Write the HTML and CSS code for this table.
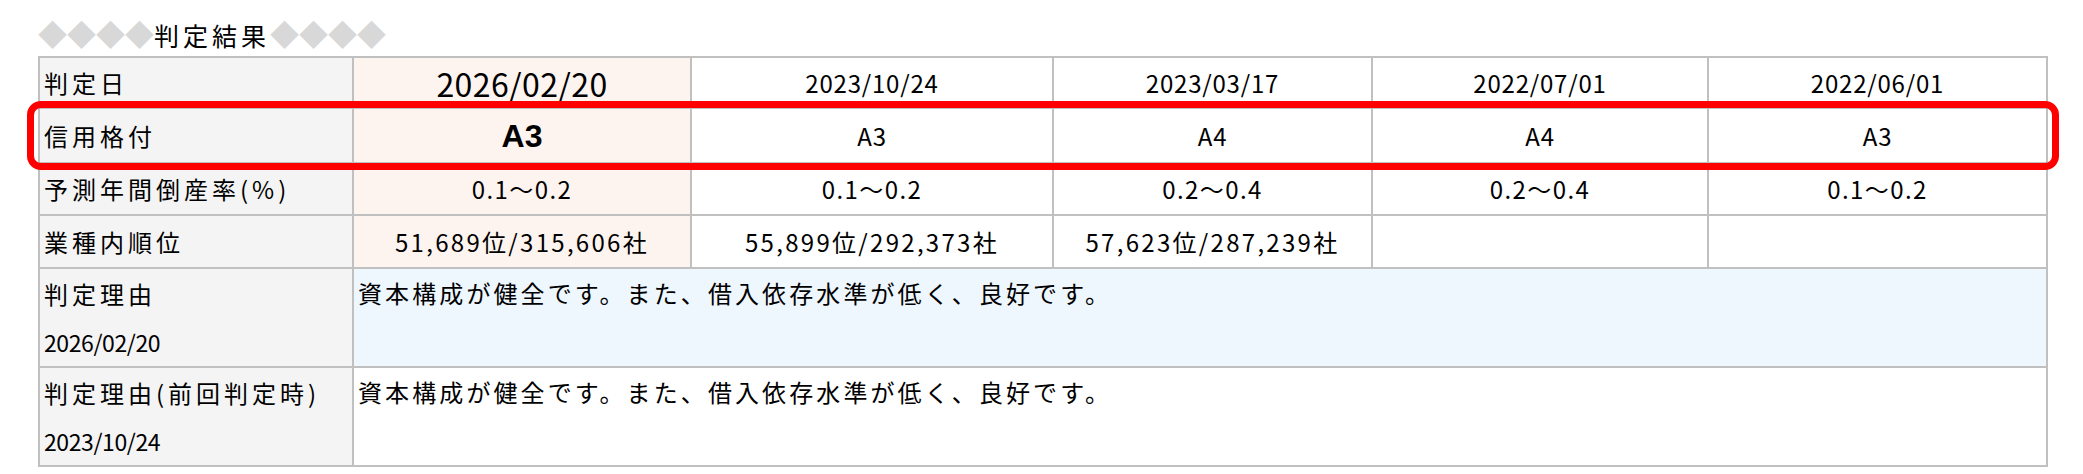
FILE: index.html
```html
<!DOCTYPE html>
<html lang="ja">
<head>
<meta charset="utf-8">
<title>判定結果</title>
<link rel="stylesheet" href="styles.css">
</head>
<body>
<div class="page">
  <h2 class="title"><span class="dia">◆◆◆◆</span>判定結果<span class="dia">◆◆◆◆</span></h2>
  <div class="result">
    <table class="grid">
      <colgroup>
        <col class="c-label">
        <col class="c-1">
        <col class="c-2">
        <col class="c-3">
        <col class="c-4">
        <col class="c-5">
      </colgroup>
      <tr class="r-date">
        <th>判定日</th>
        <td class="cur big">2026/02/20</td>
        <td>2023/10/24</td>
        <td>2023/03/17</td>
        <td>2022/07/01</td>
        <td>2022/06/01</td>
      </tr>
      <tr class="r-rate">
        <th>信用格付</th>
        <td class="cur big strong">A3</td>
        <td>A3</td>
        <td>A4</td>
        <td>A4</td>
        <td>A3</td>
      </tr>
      <tr class="r-prob">
        <th>予測年間倒産率(%)</th>
        <td class="cur">0.1〜0.2</td>
        <td>0.1〜0.2</td>
        <td>0.2〜0.4</td>
        <td>0.2〜0.4</td>
        <td>0.1〜0.2</td>
      </tr>
      <tr class="r-rank">
        <th>業種内順位</th>
        <td class="cur">51,689位/315,606社</td>
        <td>55,899位/292,373社</td>
        <td>57,623位/287,239社</td>
        <td></td>
        <td></td>
      </tr>
      <tr class="r-reason">
        <th>判定理由<br><span class="num">2026/02/20</span></th>
        <td class="reason now" colspan="5">資本構成が健全です。また、借入依存水準が低く、良好です。</td>
      </tr>
      <tr class="r-reason">
        <th>判定理由(前回判定時)<br><span class="num">2023/10/24</span></th>
        <td class="reason" colspan="5">資本構成が健全です。また、借入依存水準が低く、良好です。</td>
      </tr>
    </table>
    <div class="highlight"></div>
  </div>
</div>
</body>
</html>
```

FILE: styles.css
```css
html, body {
  margin: 0;
  padding: 0;
  background: #ffffff;
}

body {
  font-family: "Noto Sans CJK JP", sans-serif;
  color: #000000;
}

.page {
  padding: 14px 0 0 38px;
}

.title {
  margin: 0;
  height: 42px;
  font-weight: normal;
  font-size: 25px;
  line-height: 38px;
  letter-spacing: 4px;
}

.dia {
  color: #d8d8d8;
  letter-spacing: 0;
  font-size: 29px;
}

.result {
  position: relative;
  width: 2008px;
}

.grid {
  width: 2008px;
  table-layout: fixed;
  border-collapse: collapse;
  border: 2px solid #c0c0c0;
}

.c-label { width: 314px; }
.c-1 { width: 338px; }
.c-2 { width: 362px; }
.c-3 { width: 319px; }
.c-4 { width: 336px; }
.c-5 { width: 339px; }

.grid th,
.grid td {
  border: 2px solid #c0c0c0;
  padding: 0 4px;
  line-height: 48px;
  font-size: 24px;
  font-weight: normal;
}

.grid th {
  background: #f4f4f4;
  text-align: left;
  letter-spacing: 4px;
  vertical-align: middle;
}

.grid th .num {
  font-size: 23px;
  letter-spacing: -0.4px;
}

.grid td {
  text-align: center;
  letter-spacing: 0.8px;
  background: #ffffff;
}

.r-prob td {
  letter-spacing: 1.4px;
}

.r-rank td {
  letter-spacing: 2.3px;
}

.grid td.cur {
  background: #fef4ef;
}

.grid td.big {
  font-size: 32px;
  letter-spacing: 0.4px;
}

.grid td.strong {
  font-family: "Liberation Sans", "Noto Sans CJK JP", sans-serif;
  font-weight: bold;
  letter-spacing: 0;
}

.r-date th, .r-date td { height: 49px; }
.r-rate th, .r-rate td { height: 53px; }
.r-prob th, .r-prob td { height: 50px; }
.r-rank th, .r-rank td { height: 51px; }
.r-reason th, .r-reason td { height: 97px; }

.grid td.reason {
  text-align: left;
  vertical-align: top;
  letter-spacing: 3.1px;
}

.grid td.reason.now {
  background: #eef6fe;
}

.highlight {
  position: absolute;
  left: -11px;
  top: 45px;
  width: 2018px;
  height: 55px;
  border: 7px solid #ff0000;
  border-radius: 14px;
  pointer-events: none;
}
```
